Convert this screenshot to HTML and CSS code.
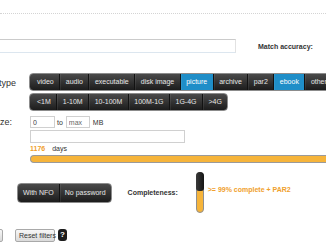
FILE: index.html
```html
<!DOCTYPE html>
<html lang="en">
<head>
    <meta charset="UTF-8">
    <meta name="viewport" content="width=device-width, initial-scale=1.0">
    <title>Search filters</title>
    <link rel="stylesheet" href="styles.css">
</head>
<body>
    <main class="search-form">
        <div class="rule"></div>

        <div class="query-row">
            <input class="query" type="text" />
            <span class="strong">Match accuracy:</span>
        </div>

        <div class="field field-type">
            <label class="label">File type</label>
            <div class="groups">
                <div class="btn-group">
                    <span class="btn">video</span>
                    <span class="btn">audio</span>
                    <span class="btn">executable</span>
                    <span class="btn">disk image</span>
                    <span class="btn active">picture</span>
                    <span class="btn">archive</span>
                    <span class="btn">par2</span>
                    <span class="btn active">ebook</span>
                    <span class="btn">other</span>
                </div>
                <div class="btn-group">
                    <span class="btn">&lt;1M</span>
                    <span class="btn">1-10M</span>
                    <span class="btn">10-100M</span>
                    <span class="btn">100M-1G</span>
                    <span class="btn">1G-4G</span>
                    <span class="btn">&gt;4G</span>
                </div>
            </div>
        </div>

        <div class="field field-size">
            <label class="label">Size:</label>
            <div class="size-inputs">
                <input class="small-input size-min" type="text" value="0" />
                <span class="to">to</span>
                <input class="small-input size-max" type="text" value="max" />
                <span class="unit">MB</span>
            </div>
        </div>

        <div class="field">
            <span></span>
            <div>
                <input class="wide-input" type="text" />
                <div class="age">
                    <span class="age-value">1176</span>
                    <span class="age-unit">days</span>
                </div>
                <div class="slider"></div>
            </div>
        </div>

        <div class="bottom-row">
            <div class="btn-group btn-group-tall">
                <span class="btn">With NFO</span>
                <span class="btn">No password</span>
            </div>
            <span class="strong completeness">Completeness:</span>
            <div class="vslider">
                <div class="vslider-handle"></div>
            </div>
            <span class="complete-value">&gt;= 99% complete + PAR2</span>
        </div>

        <div class="actions">
            <button class="plain-button apply">Apply filters</button>
            <button class="plain-button reset">Reset filters</button>
            <span class="help">?</span>
        </div>
    </main>
</body>
</html>
```

FILE: styles.css
```css
* {
    box-sizing: border-box;
}
body {
    margin: 0;
    width: 326px;
    height: 245px;
    overflow: hidden;
    background: #fff;
    font-family: "Liberation Sans", Arial, sans-serif;
    font-size: 7px;
    color: #333;
}
.search-form {
    padding-top: 13px;
}
.rule {
    border-top: 1px dotted #d4d4d4;
}
.query-row {
    display: flex;
    align-items: center;
    margin: 25px 0 0 -40px;
}
.query {
    width: 276px;
    height: 14px;
    margin: 0;
    border: 1px solid #cbcbcb;
    border-right-color: #e2e2e2;
    border-bottom-color: #dce6ef;
    font: inherit;
}
.strong {
    font-weight: bold;
    color: #333;
    white-space: nowrap;
}
.query-row .strong {
    margin-left: 22px;
}
.field {
    display: grid;
    grid-template-columns: 56px max-content;
    column-gap: 13px;
    margin-left: -40px;
}
.label {
    text-align: right;
    font-size: 9px;
    color: #333;
}
.field-type {
    margin-top: 20px;
}
.field-type .label {
    line-height: 21px;
}
.groups {
    display: flex;
    flex-direction: column;
    align-items: flex-start;
}
.btn-group {
    display: flex;
    height: 18px;
    border: 1px solid #8c8c8c;
    border-radius: 4px;
    background: linear-gradient(#4a4a4a, #1c1c1c);
    overflow: hidden;
    white-space: nowrap;
}
.btn-group + .btn-group {
    margin-top: 2px;
}
.btn {
    padding: 0 5.5px;
    line-height: 16px;
    color: #e6e6e6;
    border-left: 1px solid #121212;
    box-shadow: inset 1px 0 0 rgba(255, 255, 255, 0.07);
}
.btn:first-child {
    padding-left: 7px;
    border-left: none;
    box-shadow: none;
}
.btn.active {
    background: #1f8ec8;
    color: #fff;
}
.field-size {
    margin-top: 5px;
}
.field-size .label {
    line-height: 12px;
    padding-right: 4px;
}
.size-inputs {
    display: flex;
    align-items: center;
    margin-left: 1px;
}
.small-input {
    height: 12px;
    margin: 0;
    padding: 0 2px;
    border: 1px solid #d0d0d0;
    font: inherit;
    color: #444;
}
.size-min {
    width: 25px;
}
.size-max {
    width: 24px;
    color: #666;
}
.to {
    margin: 0 3px 0 2px;
}
.unit {
    margin-left: 3px;
}
.wide-input {
    display: block;
    width: 155px;
    height: 13px;
    margin: 2px 0 0 1px;
    border: 1px solid #d0d0d0;
    font: inherit;
}
.age {
    margin: 1px 0 0 1px;
    line-height: 10px;
}
.age-value {
    font-weight: bold;
    color: #f0a02c;
    margin-right: 5px;
}
.slider {
    width: 310px;
    height: 8px;
    margin: 1px 0 0 1px;
    border: 1px solid #9a9a9a;
    border-right: none;
    border-radius: 4px 0 0 4px;
    background: #f6b43a;
}
.bottom-row {
    display: flex;
    align-items: center;
    margin: 9px 0 0 17px;
}
.btn-group-tall {
    height: 20px;
}
.btn-group-tall .btn {
    line-height: 18px;
    padding: 0 5px;
}
.completeness {
    margin-left: 16px;
}
.vslider {
    position: relative;
    width: 8px;
    height: 41px;
    margin-left: 18px;
    border: 1px solid #8f8f8f;
    border-radius: 4px;
    background: #f6b43a;
}
.vslider-handle {
    position: absolute;
    top: -1px;
    left: -1px;
    width: 8px;
    height: 19px;
    border-radius: 4px 4px 3px 3px;
    background: linear-gradient(90deg, #3a3a3a, #151515);
}
.complete-value {
    align-self: flex-start;
    margin: 13px 0 0 4px;
    font-weight: bold;
    color: #f0a02c;
    line-height: 9px;
    white-space: nowrap;
}
.actions {
    display: flex;
    align-items: center;
    margin: 16px 0 0 -41px;
}
.plain-button {
    height: 13px;
    margin: 0;
    padding: 0 3px;
    border: 1px solid #a9a9a9;
    border-radius: 2px;
    background: linear-gradient(#f7f7f7, #dadada);
    font-family: inherit;
    font-size: 7px;
    color: #333;
    white-space: nowrap;
}
.apply {
    width: 44px;
    margin-right: 12px;
}
.reset {
    width: 40px;
}
.help {
    width: 9px;
    height: 12px;
    margin: -2px 0 0 3px;
    border-radius: 3px;
    background: #1c1c1c;
    color: #fff;
    font-weight: bold;
    font-size: 8px;
    line-height: 12px;
    text-align: center;
}
```
